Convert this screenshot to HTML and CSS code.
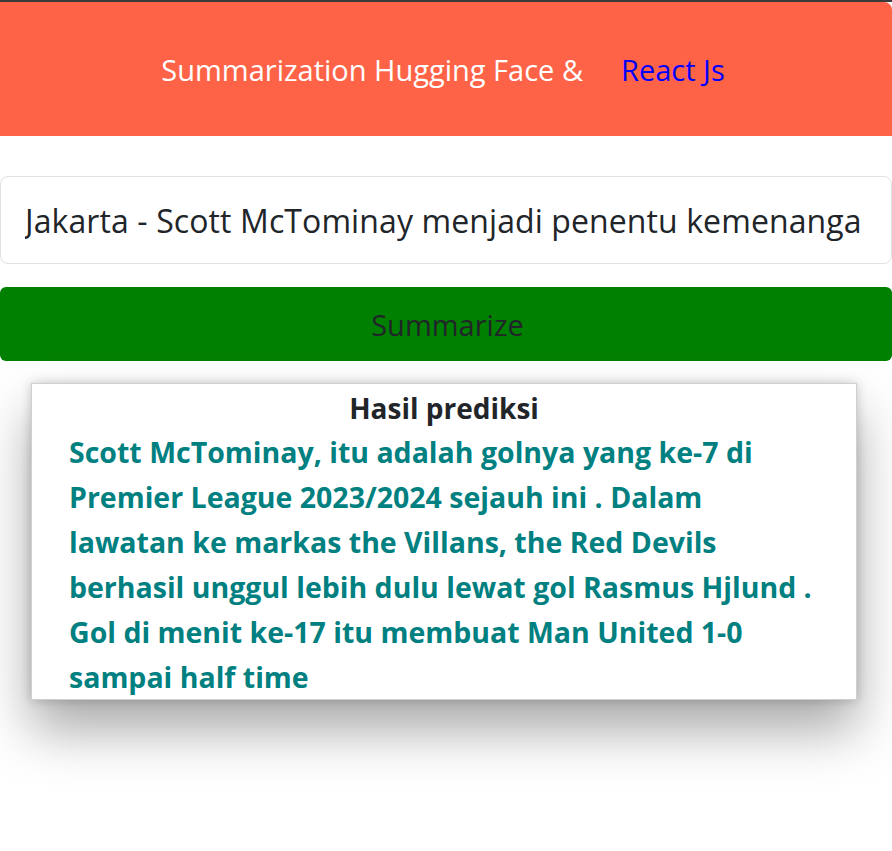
FILE: index.html
```html
<!DOCTYPE html>
<html lang="id">
<head>
<meta charset="utf-8">
<title>Summarization</title>
<link rel="stylesheet" href="styles.css">
</head>
<body>
<div class="topbar"></div>
<header class="hero">
  <span class="hero-title">Summarization Hugging Face &amp;</span>
  <a class="hero-link" href="#">React Js</a>
</header>
<main class="app">
  <input class="text-input" type="text" value="Jakarta - Scott McTominay menjadi penentu kemenangan Manchester United atas Aston Villa">
  <button class="btn-summarize" type="button">Summarize</button>
  <section class="result-card">
    <h2 class="result-title">Hasil prediksi</h2>
    <p class="result-text">Scott McTominay, itu adalah golnya yang ke-7 di<br>Premier League 2023/2024 sejauh ini . Dalam<br>lawatan ke markas the Villans, the Red Devils<br>berhasil unggul lebih dulu lewat gol Rasmus Hjlund .<br>Gol di menit ke-17 itu membuat Man United 1-0<br>sampai half time</p>
  </section>
</main>
</body>
</html>
```
FILE: styles.css
```css
* { box-sizing: border-box; }
html, body {
  margin: 0;
  padding: 0;
  background: #ffffff;
  font-family: "Open Sans", "Noto Sans", sans-serif;
  color: #212529;
}
.topbar {
  height: 2px;
  background: #3a3a3a;
}
.hero {
  background: #ff6347;
  height: 134px;
  border-top-right-radius: 8px;
  display: flex;
  align-items: center;
  justify-content: center;
  gap: 38px;
  font-size: 29px;
  padding-right: 6px;
}
.hero-title { color: #ffffff; }
.hero-link { color: #0000ff; text-decoration: none; }
.app {
  padding-top: 40px;
  padding-bottom: 151px;
  display: flex;
  flex-direction: column;
}
.text-input {
  width: 100%;
  height: 88px;
  border: 1px solid #dee2e6;
  border-radius: 8px;
  padding: 0 30px 0 24px;
  font-family: inherit;
  font-size: 32px;
  letter-spacing: 0.1px;
  color: #212529;
  background: #fff;
  outline: none;
}
.btn-summarize {
  margin-top: 23px;
  width: 100%;
  height: 74px;
  border: none;
  border-radius: 6px;
  background: #008000;
  color: #212529;
  font-family: inherit;
  font-size: 29px;
  padding-right: 3px;
}
.result-card {
  margin: 22px 0 0 31px;
  width: 826px;
  height: 317px;
  background: #fff;
  border: 1px solid #d0d0d0;
  box-shadow: 0 30px 50px rgba(0,0,0,0.34), 0 0 10px rgba(0,0,0,0.2);
  overflow: hidden;
}
.result-title {
  margin: 5px 0 0;
  text-align: center;
  font-size: 28px;
  font-weight: 700;
  line-height: 38px;
  color: #212529;
}
.result-text {
  margin: 3px 0 0;
  padding-left: 37px;
  font-size: 28.5px;
  font-weight: 700;
  line-height: 45px;
  color: #008080;
  white-space: nowrap;
}
```
